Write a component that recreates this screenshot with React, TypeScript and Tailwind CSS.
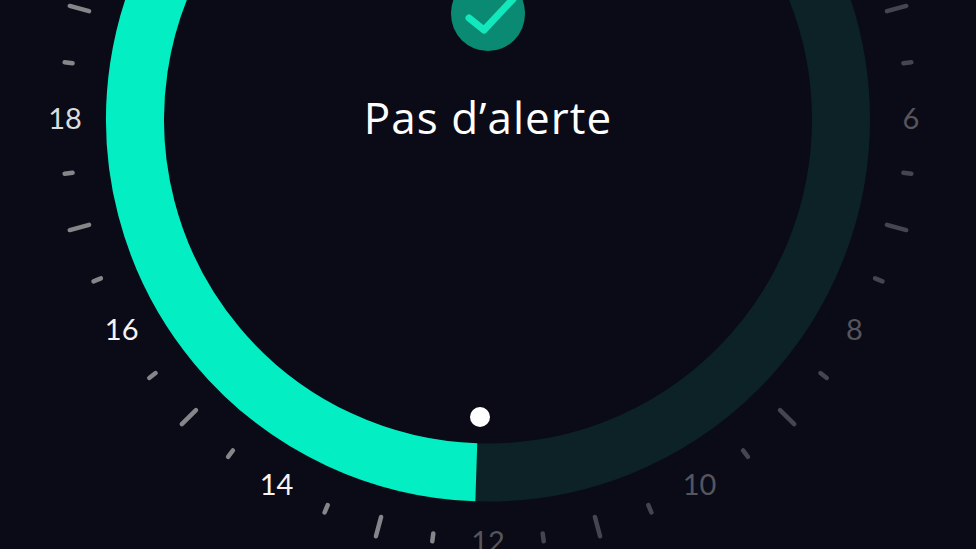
const CX = 488
const CY = 118
const RING_CY = 119.5
const TICK_COUNT = 48

const polar = (r: number, deg: number, cy = CY) => {
  const a = (deg * Math.PI) / 180
  return { x: CX + r * Math.cos(a), y: cy + r * Math.sin(a) }
}

// hours run clockwise, 6h sits at 3 o'clock on the dial
const hourAngle = (h: number) => (h - 6) * 15

const LABELS = [6, 8, 10, 12, 14, 16, 18]

function labelClass(hour: number) {
  if (hour <= 12) return 'fill-[#55555e]'
  if (hour === 18) return 'fill-[#dcdcde]'
  return 'fill-[#f4f4f4]'
}

function Dial() {
  const arcStart = polar(353, 91.9, RING_CY)
  const arcEnd = polar(353, 285, RING_CY)

  const ticks = Array.from({ length: TICK_COUNT }, (_, i) => i).filter((i) => i % 4 !== 0)

  return (
    <svg viewBox="0 0 976 549" className="absolute inset-0 w-[976px] h-[549px]">
      <circle cx={CX} cy={RING_CY} r={353} fill="none" stroke="#0c2227" strokeWidth={58} />
      <path
        d={`M ${arcStart.x} ${arcStart.y} A 353 353 0 1 1 ${arcEnd.x} ${arcEnd.y}`}
        fill="none"
        stroke="#03efc3"
        strokeWidth={58}
      />
      {ticks.map((i) => {
        const deg = i * 7.5
        const major = i % 2 === 0
        const a = polar(major ? 413 : 419, deg)
        const b = polar(major ? 433 : 427, deg)
        const bright = deg > 90 && deg < 270
        return (
          <line
            key={i}
            x1={a.x}
            y1={a.y}
            x2={b.x}
            y2={b.y}
            stroke={bright ? '#85858a' : '#45454f'}
            strokeWidth={4.5}
            strokeLinecap="round"
          />
        )
      })}
      {LABELS.map((hour) => {
        const p = polar(423, hourAngle(hour))
        return (
          <text
            key={hour}
            x={p.x}
            y={p.y + 10.5}
            textAnchor="middle"
            className={`font-['Lato',sans-serif] text-[29px] ${labelClass(hour)}`}
          >
            {hour}
          </text>
        )
      })}
      <circle cx={480} cy={417} r={10} fill="#ffffff" />
    </svg>
  )
}

export default function App() {
  return (
    <div className="relative w-[976px] h-[549px] overflow-hidden bg-[#0a0b16] font-['Open_Sans',sans-serif]">
      <Dial />
      <div className="relative flex flex-col items-center -mt-[24px]">
        <div className="w-[74px] h-[75px] rounded-full bg-[#0b8a73] flex items-center justify-center overflow-visible">
          <svg width="74" height="75" viewBox="0 0 74 75" fill="none" className="overflow-visible">
            <path
              d="M18 42 L33 54 L62 23"
              stroke="#13e8bd"
              strokeWidth="7"
              strokeLinecap="round"
              strokeLinejoin="round"
            />
          </svg>
        </div>
        <h1 className="mt-[39px] text-[44px] leading-[54px] tracking-[1px] font-normal text-white">Pas d’alerte</h1>
      </div>
    </div>
  )
}
